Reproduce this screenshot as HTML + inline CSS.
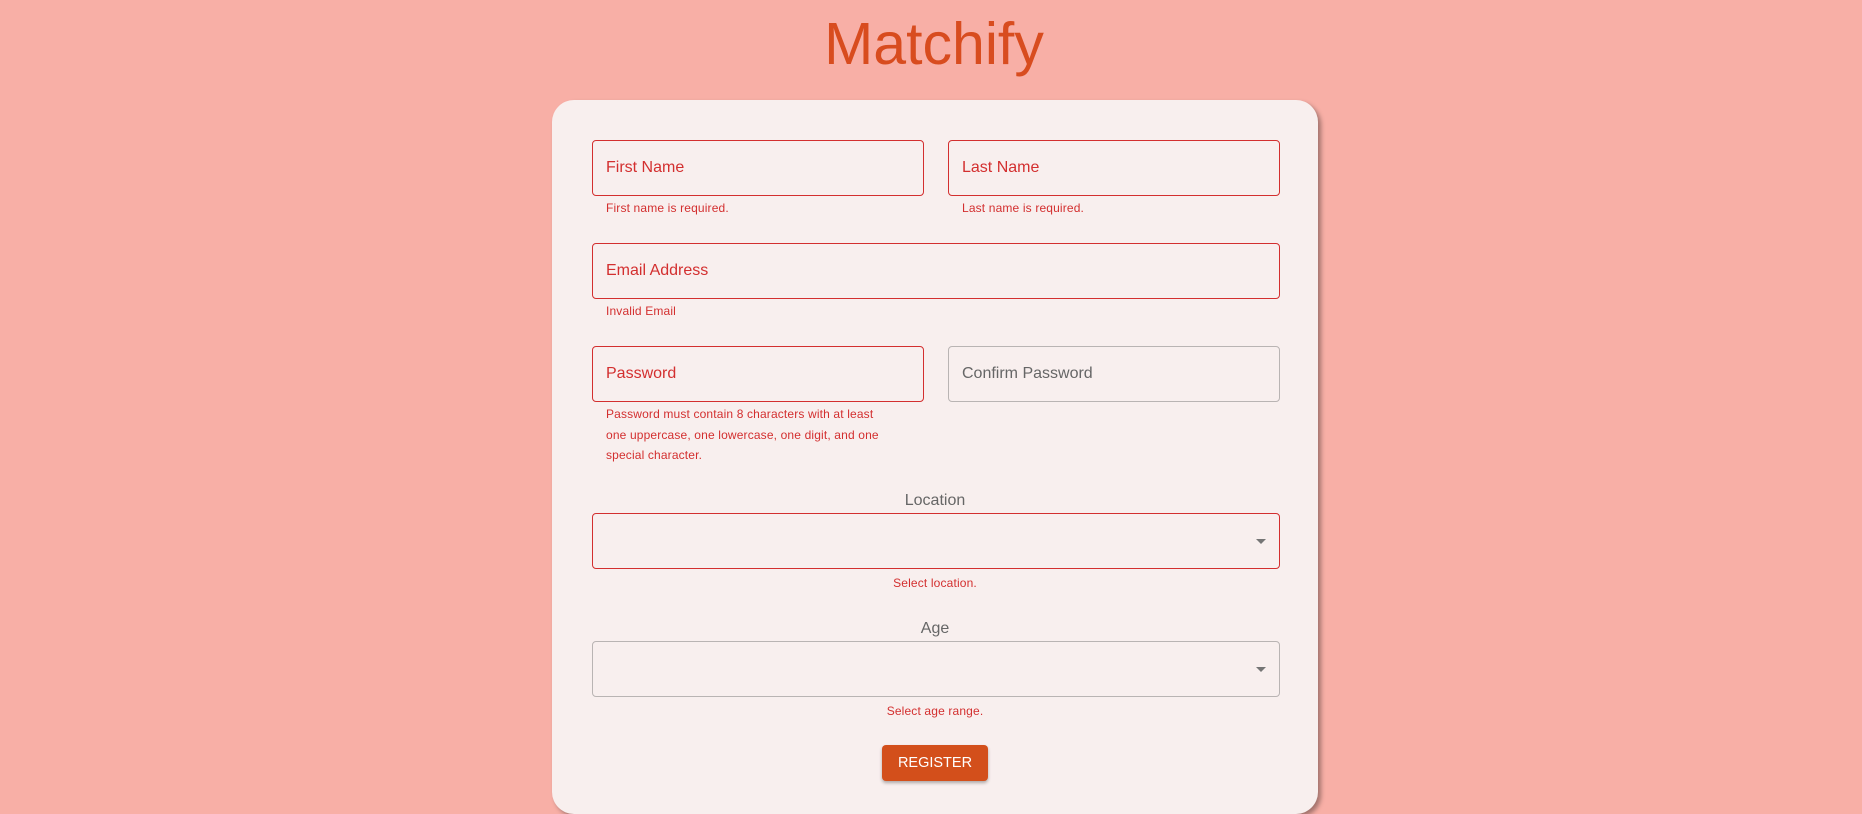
<!DOCTYPE html>
<html><head><meta charset="utf-8"><style>
*{box-sizing:border-box;margin:0;padding:0}
body{width:1862px;height:813px;background:#f8afa6;font-family:"Liberation Sans",Arial,sans-serif;position:relative;overflow:hidden}
.title{position:absolute;left:3px;width:1862px;top:9px;text-align:center;font-size:59px;color:#d84c1f;line-height:70px}
.card{position:absolute;left:552px;top:100px;width:766px;height:714px;background:#f8efee;border-radius:22px;box-shadow:3px 3px 5px rgba(0,0,0,.35)}
.f{position:absolute;height:56px;border:1px solid #d32f2f;border-radius:4px;font-size:16px;color:#d32f2f;padding-left:13px;line-height:54px}
.g{border-color:#b9b4b3;color:#666}
.e{position:absolute;font-size:12px;color:#d32f2f;letter-spacing:.15px;line-height:20.5px}
.lab{position:absolute;left:0;width:766px;text-align:center;font-size:16px;color:#666;line-height:20px}
.arr{position:absolute;right:13px;top:25px;width:0;height:0;border-left:5px solid transparent;border-right:5px solid transparent;border-top:5px solid #757575}
.btn{position:absolute;left:330px;top:645px;width:106px;height:36px;background:#d34f1b;border-radius:4px;color:#fff;font-size:14.5px;text-align:center;line-height:36px;box-shadow:0 2px 3px rgba(0,0,0,.3)}
</style></head><body>
<div class="title">Matchify</div>
<div class="card">
<div class="f" style="left:40px;top:40px;width:332px">First Name</div>
<div class="f" style="left:396px;top:40px;width:332px">Last Name</div>
<div class="e" style="left:54px;top:98px">First name is required.</div>
<div class="e" style="left:410px;top:98px">Last name is required.</div>
<div class="f" style="left:40px;top:143px;width:688px">Email Address</div>
<div class="e" style="left:54px;top:201px">Invalid Email</div>
<div class="f" style="left:40px;top:246px;width:332px">Password</div>
<div class="f g" style="left:396px;top:246px;width:332px">Confirm Password</div>
<div class="e" style="left:54px;top:304px;width:280px">Password must contain 8 characters with at least one uppercase, one lowercase, one digit, and one special character.</div>
<div class="lab" style="top:391px">Location</div>
<div class="f" style="left:40px;top:413px;width:688px"><div class="arr"></div></div>
<div class="e" style="left:0;width:766px;text-align:center;top:473px">Select location.</div>
<div class="lab" style="top:519px">Age</div>
<div class="f g" style="left:40px;top:541px;width:688px"><div class="arr"></div></div>
<div class="e" style="left:0;width:766px;text-align:center;top:601px">Select age range.</div>
<div class="btn">REGISTER</div>
</div>
</body></html>
